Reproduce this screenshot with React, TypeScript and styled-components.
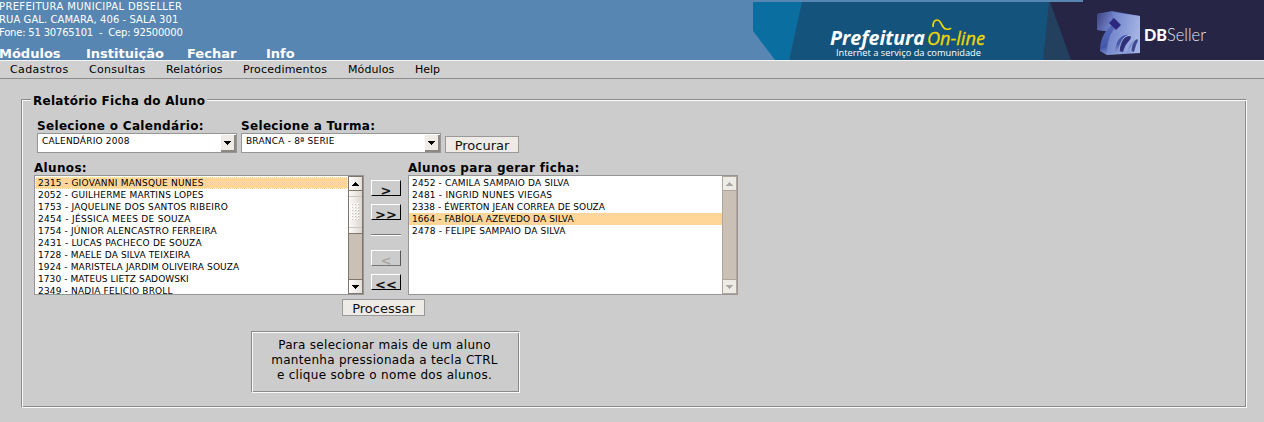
import React from "react";
import styled, { createGlobalStyle, css } from "styled-components";

const GlobalStyle = createGlobalStyle`
  * { box-sizing: border-box; }
  body {
    margin: 0;
    background: #cccccc;
    color: #000;
    font-family: "DejaVu Sans", sans-serif;
    font-size: 12px;
  }
`;

const groove = css`
  border: 1px solid;
  border-color: #8a8a88 #fafaf8 #fafaf8 #8a8a88;
  box-shadow: inset 1px 1px 0 #fafaf8, inset -1px -1px 0 #8a8a88;
`;

const Page = styled.div`
  width: 1264px;
  height: 422px;
  overflow: hidden;
`;

const Header = styled.header`
  display: flex;
  justify-content: space-between;
  height: 60px;
  background: #5786b2;
  color: #fff;
`;

const HeaderInfo = styled.div`
  display: flex;
  flex-direction: column;
  margin-left: -1px;
  white-space: nowrap;
`;

const Address = styled.div<{ $spacing: number }>`
  height: 13px;
  line-height: 13px;
  font-size: 10px;
  letter-spacing: ${(p) => p.$spacing}px;
  white-space: pre;
`;

const MainNav = styled.nav`
  display: flex;
  margin-top: 7px;
  line-height: 16px;
  font-size: 13px;
  font-weight: bold;
`;

const MainNavItem = styled.span<{ $width: number }>`
  width: ${(p) => p.$width}px;
`;

const MenuBar = styled.nav`
  display: flex;
  height: 19px;
  padding-left: 10px;
  border-top: 1px solid #f4f4f4;
  border-bottom: 1px solid #8e8e8e;
  background: #d0d0d0;
  font-size: 11px;
  line-height: 17px;
`;

const MenuItem = styled.span<{ $width: number; $spacing: number }>`
  width: ${(p) => p.$width}px;
  letter-spacing: ${(p) => p.$spacing}px;
  white-space: nowrap;
`;

const Panel = styled.main`
  ${groove}
  width: 1226px;
  height: 309px;
  margin: 20px 0 0 21px;
  padding: 0 0 0 11px;
`;

const PanelTitle = styled.h1`
  width: 176px;
  height: 16px;
  margin: -8px 0 0 -2px;
  padding: 1px 0 0 2px;
  background: #cccccc;
  font-size: 12px;
  line-height: 16px;
  letter-spacing: 0.26px;
  white-space: nowrap;
`;

const FilterRow = styled.div`
  display: flex;
  align-items: flex-end;
  gap: 4px;
  height: 36px;
  margin: 9px 0 0 4px;
`;

const Label = styled.div`
  height: 16px;
  padding-top: 1px;
  line-height: 16px;
  font-size: 12px;
  font-weight: bold;
  letter-spacing: 0.33px;
  white-space: nowrap;
`;

const SelectBox = styled.div`
  display: flex;
  justify-content: space-between;
  width: 200px;
  height: 20px;
  border: 1px solid #969696;
  background: #fff;
  font-size: 9px;
  line-height: 14px;
  letter-spacing: 0.2px;
  padding-left: 4px;
  white-space: nowrap;
`;

const SelectArrow = styled.span`
  display: flex;
  align-items: center;
  justify-content: center;
  width: 15px;
  height: 17px;
  margin-top: 1px;
  border: solid #8c8985;
  border-width: 0 2px 2px 0;
  background: #efebe7;
`;

const Button = styled.button<{ $width: number }>`
  width: ${(p) => p.$width}px;
  height: 17px;
  padding: 1px 0 0;
  border: 1px solid #999;
  background: #eeebe7;
  color: #111;
  font: 13px/16px "DejaVu Sans", sans-serif;
`;

const ListsRow = styled.div`
  display: flex;
  margin: 6px 0 0 1px;
`;

const ListBox = styled.div`
  display: flex;
  width: 330px;
  height: 120px;
  border: 1px solid #969696;
  background: #fff;
`;

const Options = styled.ul`
  flex: 1;
  margin: 0;
  padding: 1px 0 0;
  overflow: hidden;
  list-style: none;
`;

const Option = styled.li<{ $selected?: boolean; $focused?: boolean; $spacing: number }>`
  height: 12px;
  padding-left: 2px;
  border: 1px ${(p) => (p.$focused ? "dotted #fff" : "solid transparent")};
  background: ${(p) => (p.$selected ? "#ffd698" : "transparent")};
  font-size: 9px;
  line-height: 10px;
  letter-spacing: ${(p) => p.$spacing}px;
  white-space: nowrap;
`;

const Scrollbar = styled.div<{ $disabled?: boolean }>`
  display: flex;
  flex-direction: column;
  width: 15px;
  border: 1px solid ${(p) => (p.$disabled ? "#b0a69c" : "#80766c")};
  background: #cbc0b6;
`;

const ScrollArrow = styled.span<{ $disabled?: boolean; $bottom?: boolean }>`
  display: flex;
  align-items: center;
  justify-content: center;
  height: 14px;
  margin-top: ${(p) => (p.$bottom ? "auto" : 0)};
  border: solid ${(p) => (p.$disabled ? "#b0a69c" : "#80766c")};
  border-width: ${(p) => (p.$bottom ? "1px 0 0" : "0 0 1px")};
  background: ${(p) => (p.$disabled ? "#ecebe6" : "linear-gradient(90deg, #fff, #e4dfda)")};
`;

const ScrollThumb = styled.span`
  display: flex;
  align-items: center;
  justify-content: center;
  height: 43px;
  border-bottom: 1px solid #80766c;
  background:
    linear-gradient(#cfc6be, #cfc6be) 0 5px / 100% 1px no-repeat,
    linear-gradient(#cfc6be, #cfc6be) 0 36px / 100% 1px no-repeat,
    linear-gradient(90deg, #fbfaf9, #ddd6d0);
`;

const Transfer = styled.div`
  display: flex;
  flex-direction: column;
  align-items: center;
  width: 44px;
  padding-top: 21px;
`;

const MoveButton = styled.button<{ $disabled?: boolean; $gap: number }>`
  width: 30px;
  height: 16px;
  margin: 0 0 ${(p) => p.$gap}px;
  padding: 3px 0 0;
  border: 1px solid;
  border-color: #fff ${(p) => (p.$disabled ? "#555 #777" : "#000 #000")} #fff;
  background: #cccccc;
  color: ${(p) => (p.$disabled ? "#aaa9a4" : "#111")};
  font: bold 13px/14px "DejaVu Sans", sans-serif;
`;

const Divider = styled.div`
  width: 30px;
  height: 2px;
  margin-bottom: 14px;
  border-top: 1px solid #777;
  border-bottom: 1px solid #fff;
`;

const ProcessRow = styled.div`
  margin: 4px 0 0 309px;
  height: 17px;
  display: flex;
`;

const Note = styled.p`
  ${groove}
  width: 269px;
  height: 62px;
  margin: 15px 0 0 218px;
  padding: 6px 2px 0 0;
  font-size: 12px;
  line-height: 15px;
  letter-spacing: 0.3px;
  text-align: center;
  white-space: nowrap;
`;

const Triangle = ({ up, color = "#000" }: { up?: boolean; color?: string }) => (
  <svg width="7" height="4" viewBox="0 0 7 4" shapeRendering="crispEdges">
    <path d={up ? "M3 0h1v1h1v1h1v1h1v1H0V3h1V2h1V1h1z" : "M0 0h7v1H6v1H5v1H4v1H3V3H2V2H1V1H0z"} fill={color} />
  </svg>
);

const Grip = () => (
  <svg width="9" height="18" viewBox="0 0 9 18" shapeRendering="crispEdges">
    {[0, 3, 6, 9, 12, 15].map((y) =>
      [0, 3, 6].map((x) => (
        <g key={`${x}-${y}`}>
          <path d={`M${x} ${y}h2v2h-2z`} fill="#fff" />
          <path d={`M${x + 1} ${y + 1}h1v1h-1z`} fill="#c9bfb7" />
        </g>
      ))
    )}
  </svg>
);

const Banner = () => (
  <svg width="511" height="60" viewBox="0 0 511 60">
    <defs>
      <linearGradient id="cube" x1="0" y1="0" x2="0.3" y2="1">
        <stop offset="0" stopColor="#5a6cba" />
        <stop offset=".45" stopColor="#5468b8" />
        <stop offset=".8" stopColor="#4456a8" />
        <stop offset="1" stopColor="#8a9bd8" />
      </linearGradient>
      <linearGradient id="face" x1="0" y1="0" x2="1" y2="0.3">
        <stop offset="0" stopColor="#6478c4" />
        <stop offset="1" stopColor="#a3b3e4" />
      </linearGradient>
      <linearGradient id="edge" x1="0" y1="0" x2="1" y2="0.6">
        <stop offset="0" stopColor="#39427f" />
        <stop offset="1" stopColor="#7484cc" />
      </linearGradient>
    </defs>
    <path d="M0 2H50L36 60H22L0 31Z" fill="#0a6fa0" />
    <path d="M49 2H300V60H36Z" fill="#14547c" />
    <path d="M296 2H320V60H290Z" fill="#24405f" />
    <path d="M297 2H330V0H511V60H318Z" fill="#272545" />
    <text x="77" y="45" fill="#fff" fontFamily="Open Sans, sans-serif" fontWeight="700" fontStyle="italic" fontSize="19" textLength="95" lengthAdjust="spacingAndGlyphs">Prefeitura</text>
    <text x="174" y="45" fill="#f0d800" stroke="#f0d800" strokeWidth=".3" fontFamily="Open Sans, sans-serif" fontStyle="italic" fontSize="19" textLength="58" lengthAdjust="spacingAndGlyphs">On-line</text>
    <path d="M180 27C180 22 182 20 184 20C189 20 188 28 193 29C195 29.500 197 29 198 28" fill="none" stroke="#f0d800" strokeWidth="1.700" />
    <text x="83" y="56" fill="#fff" fontFamily="Open Sans, sans-serif" fontSize="9.300" fontWeight="500" textLength="145" lengthAdjust="spacingAndGlyphs">Internet a serviço da comunidade</text>
    <path d="M344 14L359 11L387 16V53L354 55L347 51C347 43 349 37 353 31L344 30Z" fill="url(#cube)" />
    <path d="M344 14L359 12V24L353 31L344 30Z" fill="url(#edge)" />
    <path d="M359 12L387 16V53H378C379 46 381 42 384 39C379 41 376 46 374 51L366 53C368 43 371 37 376 35C370 34 365 38 363 46L361 53H354C354 44 356 35 361 29Z" fill="url(#face)" />
    <path d="M361 18L368 25L363 30L356 23Z" fill="#2c2880" />
    <path d="M366 51C367 42 371 35 377 36C379 37 377 40 375 42C372 45 371 49 370 52Z" fill="#303078" />
    <path d="M378 51C378 45 381 39 384 39C386 40 384 43 383 45L381 52Z" fill="#3f4890" />
    <path d="M366 51C367 42 371 35 377 35.500M378 51C378 45 381 40 384 38.500" fill="none" stroke="#b9c8f0" strokeWidth=".8" />
    <text x="391" y="41" fill="#fff" fontFamily="Lato, sans-serif" fontWeight="900" fontSize="17" textLength="23" lengthAdjust="spacingAndGlyphs">DB</text>
    <text x="414" y="41" fill="#e4e4ec" fontFamily="Lato, sans-serif" fontWeight="300" fontSize="18" textLength="39" lengthAdjust="spacingAndGlyphs">Seller</text>
  </svg>
);

const Scroll = ({ disabled }: { disabled?: boolean }) => {
  const color = disabled ? "#aaa9a4" : "#000";
  return (
    <Scrollbar $disabled={disabled}>
      <ScrollArrow $disabled={disabled}><Triangle up color={color} /></ScrollArrow>
      {!disabled && <ScrollThumb><Grip /></ScrollThumb>}
      <ScrollArrow $disabled={disabled} $bottom><Triangle color={color} /></ScrollArrow>
    </Scrollbar>
  );
};

const mainNav: [string, number][] = [["Módulos", 87], ["Instituição", 101], ["Fechar", 79], ["Info", 40]];
const menu: [string, number, number][] = [
  ["Cadastros", 79, 0.4],
  ["Consultas", 77, 0.3],
  ["Relatórios", 77, 0.2],
  ["Procedimentos", 105, 0.2],
  ["Módulos", 67, 0.1],
  ["Help", 40, 0],
];
const students: [string, number][] = [
  ["2315 - GIOVANNI MANSQUE NUNES", 0.22],
  ["2052 - GUILHERME MARTINS LOPES", 0.2],
  ["1753 - JAQUELINE DOS SANTOS RIBEIRO", 0.23],
  ["2454 - JÉSSICA MEES DE SOUZA", 0.3],
  ["1754 - JÚNIOR ALENCASTRO FERREIRA", 0.15],
  ["2431 - LUCAS PACHECO DE SOUZA", 0.24],
  ["1728 - MAELE DA SILVA TEIXEIRA", 0.13],
  ["1924 - MARISTELA JARDIM OLIVEIRA SOUZA", 0.12],
  ["1730 - MATEUS LIETZ SADOWSKI", 0.08],
  ["2349 - NADIA FELICIO BROLL", 0.17],
];
const chosen: [string, number][] = [
  ["2452 - CAMILA SAMPAIO DA SILVA", 0.17],
  ["2481 - INGRID NUNES VIEGAS", 0.22],
  ["2338 - ÉWERTON JEAN CORREA DE SOUZA", 0.04],
  ["1664 - FABÍOLA AZEVEDO DA SILVA", 0.08],
  ["2478 - FELIPE SAMPAIO DA SILVA", 0.2],
];

export default function App() {
  return (
    <Page>
      <GlobalStyle />
      <Header>
        <HeaderInfo>
          <Address $spacing={0.35}>PREFEITURA MUNICIPAL DBSELLER</Address>
          <Address $spacing={0.07}>RUA GAL. CAMARA, 406 - SALA 301</Address>
          <Address $spacing={-0.2}>{"Fone: 51 30765101  -  Cep: 92500000"}</Address>
          <MainNav>
            {mainNav.map(([t, w]) => <MainNavItem key={t} $width={w}>{t}</MainNavItem>)}
          </MainNav>
        </HeaderInfo>
        <Banner />
      </Header>
      <MenuBar>
        {menu.map(([t, w, s]) => <MenuItem key={t} $width={w} $spacing={s}>{t}</MenuItem>)}
      </MenuBar>
      <Panel>
        <PanelTitle>Relatório Ficha do Aluno</PanelTitle>
        <FilterRow>
          <div>
            <Label>Selecione o Calendário:</Label>
            <SelectBox>CALENDÁRIO 2008<SelectArrow><Triangle /></SelectArrow></SelectBox>
          </div>
          <div>
            <Label>Selecione a Turma:</Label>
            <SelectBox>BRANCA - 8ª SERIE<SelectArrow><Triangle /></SelectArrow></SelectBox>
          </div>
          <Button $width={74}>Procurar</Button>
        </FilterRow>
        <ListsRow>
          <div>
            <Label>Alunos:</Label>
            <ListBox>
              <Options>
                {students.map(([s, sp], i) => (
                  <Option key={s} $spacing={sp} $selected={i === 0} $focused={i === 0}>{s}</Option>
                ))}
              </Options>
              <Scroll />
            </ListBox>
          </div>
          <Transfer>
            <MoveButton $gap={8}>&gt;</MoveButton>
            <MoveButton $gap={14}>&gt;&gt;</MoveButton>
            <Divider />
            <MoveButton $gap={8} $disabled>&lt;</MoveButton>
            <MoveButton $gap={0}>&lt;&lt;</MoveButton>
          </Transfer>
          <div>
            <Label>Alunos para gerar ficha:</Label>
            <ListBox>
              <Options>
                {chosen.map(([s, sp], i) => <Option key={s} $spacing={sp} $selected={i === 3}>{s}</Option>)}
              </Options>
              <Scroll disabled />
            </ListBox>
          </div>
        </ListsRow>
        <ProcessRow><Button $width={83}>Processar</Button></ProcessRow>
        <Note>
          Para selecionar mais de um aluno<br />
          mantenha pressionada a tecla CTRL<br />
          e clique sobre o nome dos alunos.
        </Note>
      </Panel>
    </Page>
  );
}
